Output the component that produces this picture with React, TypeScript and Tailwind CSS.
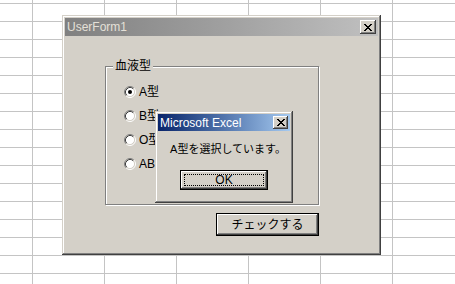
const font = "font-['Liberation_Sans','Noto_Sans_CJK_JP',sans-serif]";

const bevelWin =
  "shadow-[inset_-1px_-1px_#404040,inset_1px_1px_#d4d0c8,inset_-2px_-2px_#808080,inset_2px_2px_#ffffff]";
const bevelBtn =
  "shadow-[inset_-1px_-1px_#404040,inset_1px_1px_#ffffff,inset_-2px_-2px_#808080,inset_2px_2px_#d4d0c8]";

const xPixels = [
  [0, 0, 2], [6, 0, 2],
  [1, 1, 2], [5, 1, 2],
  [2, 2, 4],
  [3, 3, 2],
  [2, 4, 4],
  [1, 5, 2], [5, 5, 2],
  [0, 6, 2], [6, 6, 2],
];

function CloseButton({ w, h }: { w: string; h: string }) {
  return (
    <div className={`${w} ${h} flex items-center justify-center bg-[#d4d0c8] ${bevelBtn}`}>
      <svg width="8" height="7" viewBox="0 0 8 7" shapeRendering="crispEdges">
        {xPixels.map(([x, y, len], i) => (
          <rect key={i} x={x} y={y} width={len} height={1} fill="#000" />
        ))}
      </svg>
    </div>
  );
}

function Radio({ checked }: { checked?: boolean }) {
  return (
    <svg width="12" height="12" viewBox="0 0 12 12">
      <circle cx="6" cy="6" r="4.5" fill="#fff" />
      <path d="M2.11 9.89 A5.5 5.5 0 0 1 9.89 2.11" stroke="#808080" fill="none" />
      <path d="M9.89 2.11 A5.5 5.5 0 0 1 2.11 9.89" stroke="#ffffff" fill="none" />
      <path d="M2.82 9.18 A4.5 4.5 0 0 1 9.18 2.82" stroke="#404040" fill="none" />
      <path d="M9.18 2.82 A4.5 4.5 0 0 1 2.82 9.18" stroke="#d4d0c8" fill="none" />
      {checked && <circle cx="6" cy="6" r="2" fill="#000" />}
    </svg>
  );
}

const bloodTypes = ["A型", "B型", "O型", "AB型"];

export default function App() {
  return (
    <div
      className={`relative w-[455px] h-[284px] overflow-hidden bg-white ${font} bg-[linear-gradient(to_right,#c4c4c4_1px,transparent_1px),linear-gradient(to_bottom,#c4c4c4_1px,transparent_1px)] bg-size-[72px_18px] bg-position-[32px_3px]`}
    >
      {/* UserForm1 */}
      <div className={`absolute left-[62px] top-[15px] w-[319px] h-[240px] p-[3px] bg-[#d4d0c8] flex flex-col ${bevelWin}`}>
        <div className="h-[18px] flex items-center justify-between bg-linear-to-r from-[#808080] to-[#c0c0c0] pl-[2px] pr-[2px]">
          <span className="text-[12px] leading-none text-[#e4e0d8]">UserForm1</span>
          <CloseButton w="w-[16px]" h="h-[14px]" />
        </div>

        <div className="flex flex-col pl-[40px]">
          <div className="relative mt-[30px] w-[214px] h-[139px] border border-[#808080] shadow-[1px_1px_0_#ffffff,inset_1px_1px_0_#ffffff]">
            <span className="absolute -top-[8px] left-[7px] px-[2px] bg-[#d4d0c8] text-[12px] leading-[15px] text-black">
              血液型
            </span>
            <div className="flex flex-col pl-[18px] pt-[13px]">
              {bloodTypes.map((t, i) => (
                <div key={t} className="h-[24px] flex items-center gap-[3px]">
                  <Radio checked={i === 0} />
                  <span className="text-[12px] leading-none text-black">{t}</span>
                </div>
              ))}
            </div>
          </div>

          <div className="ml-[111px] mt-[8px] w-[103px] h-[23px] border border-black">
            <div className={`h-full flex items-center justify-center bg-[#d4d0c8] ${bevelBtn} text-[12px] leading-none text-black`}>
              チェックする
            </div>
          </div>
        </div>
      </div>

      {/* MsgBox */}
      <div className={`absolute left-[155px] top-[111px] w-[138px] h-[92px] p-[3px] bg-[#d4d0c8] flex flex-col ${bevelWin}`}>
        <div className="h-[17px] flex items-center justify-between bg-linear-to-r from-[#0a246a] to-[#a6caf0] pl-[2px] pr-[2px]">
          <span className="text-[12px] leading-none text-white">Microsoft Excel</span>
          <CloseButton w="w-[15px]" h="h-[13px]" />
        </div>
        <div className="mt-[10px] h-[16px] pl-[8px] flex items-center justify-center text-[11px] leading-none text-black">
          A型を選択しています。
        </div>
        <div className="mt-[13px] self-center w-[88px] h-[20px] border border-black">
          <div className={`h-full p-[3px] flex bg-[#d4d0c8] ${bevelBtn}`}>
            <div className="flex-1 flex items-center justify-center border border-dotted border-black text-[12px] leading-none text-black">
              OK
            </div>
          </div>
        </div>
      </div>
    </div>
  );
}
